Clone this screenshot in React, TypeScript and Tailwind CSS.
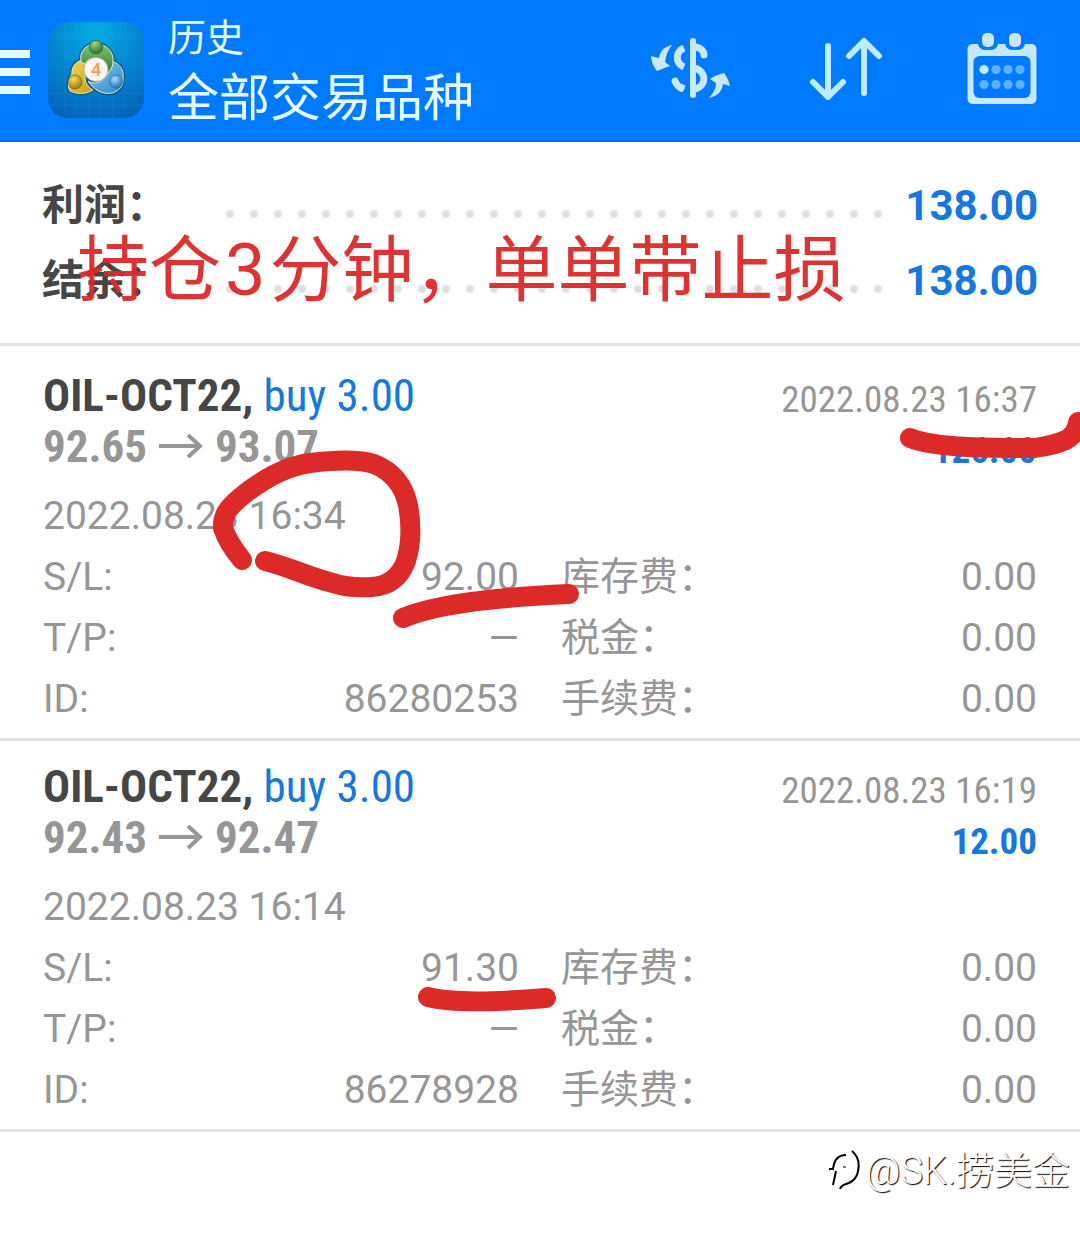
import React from 'react';

const INK = 'text-[#464646]';
const BLUE = 'text-[#1478df]';
const GREY = 'text-[#969696]';
const CONDENSED = "font-['Roboto_Condensed','Liberation_Sans_Narrow','Roboto','Noto_Sans_CJK_SC',sans-serif]";

type Trade = {
  symbol: string;
  side: string;
  from: string;
  to: string;
  closed: string;
  profit: string;
  opened: string;
  sl: string;
  id: string;
};

const trades: Trade[] = [
  {
    symbol: 'OIL-OCT22,',
    side: 'buy 3.00',
    from: '92.65',
    to: '93.07',
    closed: '2022.08.23 16:37',
    profit: '126.00',
    opened: '2022.08.23 16:34',
    sl: '92.00',
    id: '86280253',
  },
  {
    symbol: 'OIL-OCT22,',
    side: 'buy 3.00',
    from: '92.43',
    to: '92.47',
    closed: '2022.08.23 16:19',
    profit: '12.00',
    opened: '2022.08.23 16:14',
    sl: '91.30',
    id: '86278928',
  },
];

function AppLogo() {
  return (
    <svg viewBox="0 0 96 96" className="size-24 shrink-0" aria-hidden="true">
      <defs>
        <radialGradient id="tile" cx="0.5" cy="0.1" r="0.95">
          <stop offset="0" stopColor="#04aee6" />
          <stop offset="0.5" stopColor="#0484d0" />
          <stop offset="1" stopColor="#0562b8" />
        </radialGradient>
        <linearGradient id="green" x1="0" y1="0" x2="0" y2="1">
          <stop offset="0" stopColor="#86c873" />
          <stop offset="1" stopColor="#2a7d35" />
        </linearGradient>
        <linearGradient id="gold" x1="0" y1="0" x2="1" y2="1">
          <stop offset="0" stopColor="#f0dc5c" />
          <stop offset="1" stopColor="#c79f1a" />
        </linearGradient>
        <linearGradient id="sky" x1="0" y1="0" x2="1" y2="1">
          <stop offset="0" stopColor="#8ccbf2" />
          <stop offset="1" stopColor="#2a86cf" />
        </linearGradient>
        <radialGradient id="greenHead" cx="0.4" cy="0.25" r="0.8">
          <stop offset="0" stopColor="#9dd585" />
          <stop offset="1" stopColor="#1d6c2d" />
        </radialGradient>
        <radialGradient id="goldHead" cx="0.4" cy="0.3" r="0.8">
          <stop offset="0" stopColor="#f6df5a" />
          <stop offset="1" stopColor="#8f6a08" />
        </radialGradient>
        <radialGradient id="skyHead" cx="0.4" cy="0.3" r="0.8">
          <stop offset="0" stopColor="#a6dcfb" />
          <stop offset="1" stopColor="#1464a8" />
        </radialGradient>
      </defs>
      <rect width="96" height="96" rx="20" fill="url(#tile)" />
      <path
        d="M17 2v92M29 0v96M41 0v96M53 0v96M65 0v96M77 2v92M2 17h92M0 31h96M0 45h96M0 58h96M0 71h96M2 83h92"
        stroke="#4cc2f2"
        strokeOpacity="0.14"
        strokeWidth="1"
      />
      <g stroke="#0a3557" strokeOpacity="0.55" strokeWidth="3.500" strokeLinejoin="round" fill="#0a3557" fillOpacity="0.4">
        <path d="M33 40C31 29 38 22 48 22s18 7 17 18c0 4-2 8-5 10L42 42Z" />
        <path d="M40 37C29 37 23 44 24 52c-4 6-5 12-2 17 6 3 15 4 23-1l2-6Z" />
        <path d="M64 39c8 3 12 9 11 16 1 8-3 14-11 16-9 2-19-3-24-12l18-6Z" />
      </g>
      <g stroke="#e8f0c8" strokeWidth="1" strokeLinejoin="round">
        <path d="M40 59c4 2 8 3 13 0 6-4 9-10 11-20 8 3 12 9 11 16 1 8-3 14-11 16-9 2-19-3-24-12Z" fill="url(#sky)" />
        <path d="M41 37C29 37 23 44 24 52c-4 6-5 12-2 17 6 3 15 4 23-1-5-3-8-7-8-13 0-6 0-12 4-18Z" fill="url(#gold)" />
        <path d="M33 40C31 29 38 22 48 22s18 7 17 18c0 4-2 8-5 11-1-9-5-15-12-15-6 0-9 2-11 6l-4-2Z" fill="url(#green)" />
      </g>
      <circle cx="48" cy="25" r="6.800" fill="url(#greenHead)" stroke="#1d5b2a" strokeWidth="0.700" />
      <circle cx="27" cy="60" r="7" fill="url(#goldHead)" stroke="#806005" strokeWidth="0.700" />
      <circle cx="68" cy="59.500" r="6.500" fill="url(#skyHead)" stroke="#1c68a8" strokeWidth="0.700" />
      <circle cx="48" cy="47.500" r="12" fill="#fbf6f1" stroke="#b5a38d" strokeWidth="0.800" />
      <text x="48" y="54" textAnchor="middle" fontFamily="Roboto, sans-serif" fontSize="18" fontWeight="500" fill="#f6a04d">
        4
      </text>
    </svg>
  );
}

function CurrencyIcon() {
  return (
    <svg viewBox="0 0 80 64" className="h-16 w-20 overflow-visible" fill="none" stroke="#c8e8fc" strokeWidth="7" strokeLinecap="round" aria-hidden="true">
      <path d="M44 5v54" strokeWidth="6" />
      <path d="M35 12C26 16 26 27 35 31" strokeLinecap="butt" />
      <path d="M47 11c5 1 8 4 8 8" />
      <path d="M45 32C58 35 58 50 46 53" strokeLinecap="butt" />
      <path d="M26 45C27 48 30 51 32 52" />
      <path d="M31 51l4 2" strokeLinecap="butt" />
      <path d="M23 9C14 11 11 16 10 22L2 20C2 26 5 31 8 35C12 33 16 32 21 30L16 26C17 19 19 14 23 9Z" fill="#c8e8fc" stroke="none" />
      <path d="M60 62C69 60 73 55 74 48L81 50C80 45 78 41 75 37C70 38 65 40 61 43L67 47C67 53 64 57 60 62Z" fill="#c8e8fc" stroke="none" />
    </svg>
  );
}

function SortIcon() {
  return (
    <svg viewBox="0 0 74 66" className="h-[66px] w-[74px]" fill="none" stroke="#c0ebff" strokeWidth="6" strokeLinecap="round" strokeLinejoin="round" aria-hidden="true">
      <path d="M19 11v51M4 47l15 15 15-15M55 58V6M40 21 55 6l15 15" />
    </svg>
  );
}

function CalendarIcon() {
  return (
    <svg viewBox="0 0 70 72" className="h-[72px] w-[70px]" aria-hidden="true">
      <rect x="0.500" y="12" width="69" height="60" rx="5" fill="#c6e7fd" />
      <rect x="11" y="-2" width="20" height="20" rx="7" fill="#007aff" />
      <rect x="38" y="-2" width="20" height="20" rx="7" fill="#007aff" />
      <rect x="15" y="1" width="12" height="14" rx="5" fill="#c6e7fd" />
      <rect x="42" y="1" width="12" height="14" rx="5" fill="#d0e0ff" />
      <rect x="6.500" y="24" width="57" height="42" rx="6" fill="#007aff" />
      <circle cx="17" cy="37.500" r="4.600" fill="#c0f0ff" />
      {[29, 41, 53].map((x) => (
        <circle key={x} cx={x} cy="37.500" r="4.600" fill="#5fb0ff" />
      ))}
      {[17, 29, 41, 53].map((x) => (
        <circle key={x} cx={x} cy="52.500" r="4.600" fill="#5fb0ff" />
      ))}
    </svg>
  );
}

function SummaryRow({ label, value }: { label: string; value: string }) {
  return (
    <div className="flex h-[75px] items-center">
      <dt className={`w-[176px] shrink-0 text-[42px] font-bold ${INK}`}>{label}</dt>
      <span
        aria-hidden="true"
        className="mt-4 h-3 flex-1 bg-[radial-gradient(circle,#dfdfdf_3px,transparent_5px)] bg-[length:24px_12px] bg-repeat-x"
      />
      <dd className={`w-[148px] shrink-0 text-right text-[42px] font-bold ${BLUE}`}>{value}</dd>
    </div>
  );
}

function Detail({ label, value }: { label: string; value: string }) {
  return (
    <div className="flex h-[61px] items-center justify-between">
      <dt>{label}</dt>
      <dd>{value}</dd>
    </div>
  );
}

function TradeCard({ trade }: { trade: Trade }) {
  return (
    <article className="border-b-3 border-[#e2e2e2] px-[43px] pt-5 pb-2">
      <div className={`flex justify-between ${CONDENSED}`}>
        <div>
          <h2 className={`text-[45px] leading-[51px] font-bold ${INK}`}>
            {trade.symbol} <span className={`font-normal ${BLUE}`}>{trade.side}</span>
          </h2>
          <p className={`flex items-center gap-3 text-[45px] leading-[51px] font-bold ${GREY}`}>
            {trade.from}
            <svg viewBox="0 0 44 26" className="h-[26px] w-11" fill="none" stroke="currentColor" strokeWidth="4" aria-label="→">
              <path d="M0 12h42M29 1l12 11-12 11" />
            </svg>
            {trade.to}
          </p>
        </div>
        <div className="pt-1 text-right text-[37px] leading-[51px]">
          <p className={GREY}>{trade.closed}</p>
          <p className={`font-bold ${BLUE}`}>{trade.profit}</p>
        </div>
      </div>
      <div className={`pt-[10px] text-[39px] ${GREY}`}>
        <p className="flex h-[61px] items-center">{trade.opened}</p>
        <dl className="grid grid-cols-2 gap-x-[42px]">
          <Detail label="S/L:" value={trade.sl} />
          <Detail label="库存费：" value="0.00" />
          <Detail label="T/P:" value="—" />
          <Detail label="税金：" value="0.00" />
          <Detail label="ID:" value={trade.id} />
          <Detail label="手续费：" value="0.00" />
        </dl>
      </div>
    </article>
  );
}

function PenMarks() {
  return (
    <svg
      viewBox="0 0 1080 1233"
      className="pointer-events-none absolute top-0 left-0 h-[1233px] w-[1080px]"
      fill="none"
      stroke="#dc2a29"
      strokeWidth="20"
      strokeLinecap="round"
      strokeLinejoin="round"
      aria-hidden="true"
    >
      <path d="M242 560C233 549 227 540 223 528C222 512 232 504 247 492C267 477 287 466 310 463C335 460 359 459 374 464C394 472 404 487 408 505C412 527 411 545 406 561C400 577 389 586 372 587C357 588 345 587 333 583C311 578 287 566 265 561" />
      <path d="M403 618C438 603 500 597 569 594" />
      <path d="M910 438C935 448 985 448 1035 448C1060 444 1076 440 1078 422" />
      <path d="M428 997C455 1004 510 1001 546 998" />
    </svg>
  );
}

export default function App() {
  return (
    <div className="relative min-h-screen overflow-hidden bg-white font-['Roboto','Noto_Sans_CJK_SC',sans-serif]" lang="zh-CN">
      <header className="flex h-[142px] items-center border-b-2 border-[#0a6fe0] bg-[#007aff] pr-[43px]">
        <button type="button" aria-label="菜单" className="flex w-[30px] flex-col gap-[10px] pt-1">
          <span className="h-2 bg-[#e6fbff]" />
          <span className="h-2 bg-[#e6fbff]" />
          <span className="h-2 bg-[#e6fbff]" />
        </button>
        <div className="ml-[18px] flex items-center gap-6">
          <AppLogo />
          <div className="pt-1 text-[#e6fbff]">
            <p className="text-[38px] leading-[54px]">历史</p>
            <h1 className="text-[51px] leading-[68px]">全部交易品种</h1>
          </div>
        </div>
        <div className="ml-auto flex items-center gap-20 pb-1">
          <button type="button" aria-label="货币"><CurrencyIcon /></button>
          <button type="button" aria-label="排序"><SortIcon /></button>
          <button type="button" aria-label="日历" className="ml-1"><CalendarIcon /></button>
        </div>
      </header>

      <main>
        <section className="relative border-b-3 border-[#e2e2e2] px-[42px] pt-[26px] pb-[25px]">
          <dl>
            <SummaryRow label="利润：" value="138.00" />
            <SummaryRow label="结余：" value="138.00" />
          </dl>
          <p className="absolute top-[79px] left-[77px] text-[72px] leading-[100px] whitespace-nowrap text-[#dc2a29] opacity-95">
            持仓<span className="mx-1">3</span>分钟，单单带止损
          </p>
        </section>
        <div className="pt-1">
          {trades.map((trade) => (
            <TradeCard key={trade.id} trade={trade} />
          ))}
        </div>
      </main>

      <footer className="flex items-center justify-end pt-3 pr-[10px] text-[38px] leading-[54px] font-light text-white [text-shadow:1px_1px_1px_#000]">
        <svg viewBox="0 0 34 44" className="mr-1 h-11 w-[34px]" fill="none" stroke="#000" strokeWidth="2" aria-hidden="true">
          <path d="M5 36 8 22M1 20h4c1-9 5-14 13-14" />
          <path d="M24 2c7 6 8 15 5 24-3 6-7 8-11 9-3 1-5 2-6 5" />
          <path d="M15 18h3" strokeWidth="1" />
        </svg>
        <span>@SK.捞美金</span>
      </footer>

      <PenMarks />
    </div>
  );
}
